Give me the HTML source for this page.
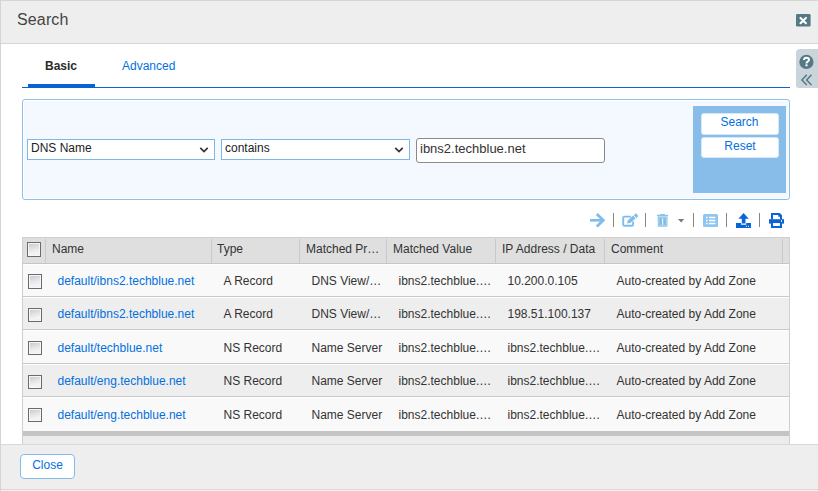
<!DOCTYPE html>
<html><head><meta charset="utf-8">
<style>
*{box-sizing:border-box;margin:0;padding:0}
html,body{width:818px;height:491px;overflow:hidden;background:#fff;font-family:"Liberation Sans",sans-serif;font-size:12px;color:#333}
.a{position:absolute}
.t{position:absolute;white-space:nowrap;line-height:14px}
#dlg{position:absolute;left:0;top:0;width:818px;height:491px;border-left:1px solid #d4d4d4;border-top:1px solid #d6d6d6}
#hdr{left:1px;top:1px;width:817px;height:42px;background:#eeeeee}
#hdrb{left:1px;top:43px;width:817px;height:1px;background:#d6d6d6}
.lnk{color:#0470df}
.sep{position:absolute;width:1px;background:#c9c9c9}
.row{position:absolute;left:23px;width:766px}
.rb{position:absolute;left:23px;width:766px;height:1px;background:#c8c8c8}
.cb{position:absolute;width:14px;height:15px;border:1px solid #6b6b6b;background:linear-gradient(165deg,#c2c7cf 0%,#e3e5e8 45%,#f4f4f4 75%,#ececec 100%);box-shadow:inset 0 0 0 1px #f6f6f6}
.tsep{position:absolute;top:213px;width:1px;height:14px;background:#8d8677}
</style></head><body>
<div id="dlg"></div>
<div id="hdr" class="a"></div>
<div id="hdrb" class="a"></div>
<div class="t" style="left:17px;top:11px;font-size:16px;line-height:18px;color:#444;letter-spacing:0.14px">Search</div>
<!-- close icon -->
<svg class="a" style="left:795px;top:13px" width="17" height="15" viewBox="0 0 17 15"><rect x="1" y="0.9" width="14.6" height="12.6" rx="1.3" fill="#557885"/><path d="M5.5 4.9 L10.9 10.2 M10.9 4.9 L5.5 10.2" stroke="#fff" stroke-width="2.1" stroke-linecap="round"/></svg>

<!-- help panel -->
<div class="a" style="left:796px;top:49px;width:22px;height:39px;background:#c9d5db;border-radius:4px 0 0 3px"></div>
<svg class="a" style="left:796px;top:49px" width="22" height="40" viewBox="0 0 22 40">
<circle cx="10.4" cy="12.9" r="7.1" fill="#557885"/>
<path d="M8 11.1 Q8 8.7 10.5 8.7 Q13 8.7 13 10.8 Q13 12 11.6 12.7 Q10.5 13.3 10.5 14.4" fill="none" stroke="#fff" stroke-width="2"/>
<rect x="9.5" y="15.3" width="2" height="2" fill="#fff"/>
<path d="M10.8 25.8 L5.9 30.9 L10.8 36 M15.5 25.8 L10.6 30.9 L15.5 36" fill="none" stroke="#557885" stroke-width="1.5"/>
</svg>

<!-- tabs -->
<div class="t" style="left:45px;top:59px;font-weight:bold;color:#2b2b2b">Basic</div>
<div class="t lnk" style="left:122px;top:59px">Advanced</div>
<div class="a" style="left:28px;top:84px;width:67px;height:4px;background:#0962d6"></div>
<div class="a" style="left:22px;top:87px;width:768px;height:1px;background:#0962d6"></div>

<!-- filter box -->
<div class="a" style="left:22px;top:99px;width:768px;height:101px;border:1px solid #8ac1ed;border-radius:3px;background:#f3f9fe;box-shadow:inset 0 0 0 1px #fff"></div>
<div class="a" style="left:27px;top:139px;width:188px;height:21px;border:1px solid #7db7e7;background:#fff"></div>
<div class="t" style="left:31px;top:141px;color:#222">DNS Name</div>
<svg class="a" style="left:199px;top:146px" width="11" height="8" viewBox="0 0 11 8"><path d="M1.3 1.8 L5 5.5 L8.7 1.8" fill="none" stroke="#333" stroke-width="1.7"/></svg>
<div class="a" style="left:221px;top:139px;width:189px;height:21px;border:1px solid #7db7e7;background:#fff"></div>
<div class="t" style="left:225px;top:141px;color:#222">contains</div>
<svg class="a" style="left:394px;top:146px" width="11" height="8" viewBox="0 0 11 8"><path d="M1.3 1.8 L5 5.5 L8.7 1.8" fill="none" stroke="#333" stroke-width="1.7"/></svg>
<div class="a" style="left:416px;top:138px;width:189px;height:25px;border:1px solid #8a8a8a;border-radius:3px;background:#fff"></div>
<div class="t" style="left:420px;top:141px;font-size:13px;line-height:15px;color:#333">ibns2.techblue.net</div>

<div class="a" style="left:693px;top:106px;width:93px;height:87px;background:#89bde9"></div>
<div class="a" style="left:701px;top:113px;width:78px;height:22px;border:1px solid #d6e9f8;border-radius:3px;background:#fff"></div>
<div class="t lnk" style="left:700.5px;top:115px;width:78px;text-align:center">Search</div>
<div class="a" style="left:701px;top:137px;width:78px;height:21px;border:1px solid #d6e9f8;border-radius:3px;background:#fff"></div>
<div class="t lnk" style="left:701px;top:139px;width:78px;text-align:center">Reset</div>

<!-- toolbar -->
<svg class="a" style="left:580px;top:205px" width="220" height="30" viewBox="580 205 220 30">
<path d="M590 220.3 H603" stroke="#80bcec" stroke-width="2.6"/>
<path d="M596.8 214 L603.3 220.3 L596.8 226.6" fill="none" stroke="#80bcec" stroke-width="2.8" stroke-linecap="butt"/>
<rect x="613" y="213" width="1" height="14" fill="#8d8677"/>
<path d="M631 216.6 H624.5 Q623.2 216.6 623.2 217.9 V224.5 Q623.2 225.8 624.5 225.8 H631.8 Q633.1 225.8 633.1 224.5 V221.6" fill="none" stroke="#80bcec" stroke-width="1.9"/>
<path d="M627 223.5 L627.9 220.2 L633.2 215.6 L635.6 218.4 L630.3 223 Z M633.8 215.1 L636 213.2 L638.4 216 L636.2 217.9 Z" fill="#80bcec"/>
<rect x="645" y="213" width="1" height="14" fill="#8d8677"/>
<rect x="656.9" y="214.8" width="11.2" height="1.4" rx="0.5" fill="#8ec2e8"/>
<rect x="660.1" y="213.9" width="4.9" height="1.2" rx="0.5" fill="#8ec2e8"/>
<path d="M657.7 216.6 H667.5 V226 Q667.5 226.7 666.8 226.7 H658.4 Q657.7 226.7 657.7 226 Z" fill="#8ec2e8"/>
<path d="M658.9 217.9 V225.4 H666.3 V217.9 Z" fill="none" stroke="#b9d9f1" stroke-width="0.7"/>
<path d="M660.8 218.4 V225 M664.6 218.4 V225" stroke="#7fb8e3" stroke-width="1.3"/>
<path d="M662.6 218.6 V224.8" stroke="#f4f9fd" stroke-width="1"/>
<path d="M678 219 H684.2 L681.1 222.6 Z" fill="#7a7a7a"/>
<rect x="693" y="213" width="1" height="14" fill="#8d8677"/>
<rect x="703" y="214" width="15" height="13" rx="1.5" fill="#8ec5f1"/>
<path d="M706 217.5 H707.6 M709 217.5 H715.3 M706 220.5 H707.6 M709 220.5 H715.3 M706 223.5 H707.6 M709 223.5 H715.3" stroke="#fff" stroke-width="1.5"/>
<rect x="726" y="213" width="1" height="14" fill="#8d8677"/>
<path d="M743.6 213 L748.8 218.8 H745.5 V223.6 H741.8 V218.8 H738.4 Z" fill="#0a64d8"/>
<path d="M736 223 H741.1 V224.7 H746.2 V223 H751 V227.9 H736 Z" fill="#0a64d8"/>
<rect x="745.9" y="225.8" width="1" height="1" fill="#fff"/><rect x="748" y="225.8" width="1" height="1" fill="#fff"/>
<rect x="759" y="213" width="1" height="14" fill="#8d8677"/>
<path d="M771 219.5 V213 H779.8 L782 215.2 V219.5 H780 V216.8 H778.3 V215.1 H773 V219.5 Z" fill="#0a64d8"/>
<rect x="769" y="219.2" width="15" height="4.4" fill="#0a64d8"/>
<rect x="781" y="220.2" width="1" height="1.6" fill="#fff"/>
<path d="M771 223 H773 V225.8 H780 V223 H782 V227.9 H771 Z" fill="#0a64d8"/>
<rect x="773" y="223.1" width="7" height="2.7" fill="#fff"/>
</svg>

<!-- table -->
<div class="a" style="left:22px;top:237px;width:768px;height:207px;border:1px solid #cfcfcf;border-bottom:none;background:#ececec"></div>
<div class="a" style="left:23px;top:238px;width:766px;height:25px;background:#dfdfdf"></div>
<div class="a" style="left:23px;top:263px;width:766px;height:1px;background:#c6c6c6"></div>
<div class="sep" style="left:45px;top:239px;height:24px"></div>
<div class="sep" style="left:211px;top:239px;height:24px"></div>
<div class="sep" style="left:299px;top:239px;height:24px"></div>
<div class="sep" style="left:386px;top:239px;height:24px"></div>
<div class="sep" style="left:495px;top:239px;height:24px"></div>
<div class="sep" style="left:604px;top:239px;height:24px"></div>
<div class="sep" style="left:782px;top:239px;height:24px"></div>
<div class="cb" style="left:27px;top:242px"></div>
<div class="t" style="left:52px;top:242px">Name</div>
<div class="t" style="left:217px;top:242px">Type</div>
<div class="t" style="left:306px;top:242px">Matched Pr…</div>
<div class="t" style="left:393px;top:242px">Matched Value</div>
<div class="t" style="left:502px;top:242px">IP Address / Data</div>
<div class="t" style="left:611px;top:242px">Comment</div>

<!-- rows -->
<div class="row" style="top:264px;height:32px;background:#f9f9f9;border-top:1px solid #fff"></div>
<div class="rb" style="top:296px"></div>
<div class="row" style="top:297px;height:32px;background:#eeeeee;border-top:1px solid #fff"></div>
<div class="rb" style="top:329px"></div>
<div class="row" style="top:330px;height:33px;background:#f9f9f9;border-top:1px solid #fff"></div>
<div class="rb" style="top:363px"></div>
<div class="row" style="top:364px;height:32px;background:#eeeeee;border-top:1px solid #fff"></div>
<div class="rb" style="top:396px"></div>
<div class="row" style="top:397px;height:34px;background:#f9f9f9;border-top:1px solid #fff"></div>
<div class="a" style="left:23px;top:431px;width:766px;height:5px;background:#c4c4c4"></div>

<div class="cb" style="left:28px;top:274px"></div>
<div class="t lnk" style="left:57.5px;top:274px">default/ibns2.techblue.net</div>
<div class="t" style="left:223.5px;top:274px">A Record</div>
<div class="t" style="left:311.5px;top:274px">DNS View/…</div>
<div class="t" style="left:398.5px;top:274px">ibns2.techblue.…</div>
<div class="t" style="left:507.5px;top:274px">10.200.0.105</div>
<div class="t" style="left:616.5px;top:274px">Auto-created by Add Zone</div>

<div class="cb" style="left:28px;top:308px;height:14px"></div>
<div class="t lnk" style="left:57.5px;top:307px">default/ibns2.techblue.net</div>
<div class="t" style="left:223.5px;top:307px">A Record</div>
<div class="t" style="left:311.5px;top:307px">DNS View/…</div>
<div class="t" style="left:398.5px;top:307px">ibns2.techblue.…</div>
<div class="t" style="left:507.5px;top:307px">198.51.100.137</div>
<div class="t" style="left:616.5px;top:307px">Auto-created by Add Zone</div>

<div class="cb" style="left:28px;top:341px;height:14px"></div>
<div class="t lnk" style="left:57.5px;top:341px">default/techblue.net</div>
<div class="t" style="left:223.5px;top:341px">NS Record</div>
<div class="t" style="left:311.5px;top:341px">Name Server</div>
<div class="t" style="left:398.5px;top:341px">ibns2.techblue.…</div>
<div class="t" style="left:507.5px;top:341px">ibns2.techblue.…</div>
<div class="t" style="left:616.5px;top:341px">Auto-created by Add Zone</div>

<div class="cb" style="left:28px;top:375px;height:14px"></div>
<div class="t lnk" style="left:57.5px;top:374px">default/eng.techblue.net</div>
<div class="t" style="left:223.5px;top:374px">NS Record</div>
<div class="t" style="left:311.5px;top:374px">Name Server</div>
<div class="t" style="left:398.5px;top:374px">ibns2.techblue.…</div>
<div class="t" style="left:507.5px;top:374px">ibns2.techblue.…</div>
<div class="t" style="left:616.5px;top:374px">Auto-created by Add Zone</div>

<div class="cb" style="left:28px;top:408px;height:14px"></div>
<div class="t lnk" style="left:57.5px;top:408px">default/eng.techblue.net</div>
<div class="t" style="left:223.5px;top:408px">NS Record</div>
<div class="t" style="left:311.5px;top:408px">Name Server</div>
<div class="t" style="left:398.5px;top:408px">ibns2.techblue.…</div>
<div class="t" style="left:507.5px;top:408px">ibns2.techblue.…</div>
<div class="t" style="left:616.5px;top:408px">Auto-created by Add Zone</div>

<!-- footer -->
<div class="a" style="left:1px;top:444px;width:817px;height:1px;background:#d9d9d9"></div>
<div class="a" style="left:1px;top:445px;width:817px;height:44px;background:#eeeeee"></div>
<div class="a" style="left:1px;top:489px;width:817px;height:1px;background:#d6d6d6"></div>
<div class="a" style="left:1px;top:490px;width:817px;height:1px;background:#f4f4f4"></div>
<div class="a" style="left:20px;top:454px;width:55px;height:25px;border:1px solid #80bcf0;border-radius:4px;background:#fff"></div>
<div class="t lnk" style="left:20px;top:458px;width:55px;text-align:center">Close</div>
</body></html>
